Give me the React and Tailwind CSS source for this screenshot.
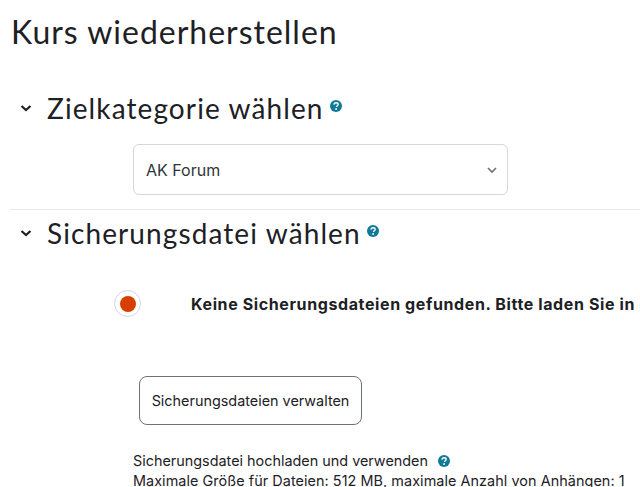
function Help({ size = 12 }) {
  return (
    <svg width={size} height={size} viewBox="0 0 16 16" className="shrink-0">
      <circle cx="8" cy="8" r="8" fill="#0f7a96" />
      <path d="M5.3 6.2C5.4 4.6 6.6 3.7 8.1 3.7c1.6 0 2.7 1 2.7 2.2 0 1-.6 1.5-1.3 2-.6.4-.8.7-.8 1.4" fill="none" stroke="#fff" strokeWidth="1.9" />
      <circle cx="8.1" cy="12" r="1.2" fill="#fff" />
    </svg>
  );
}

function Chevron() {
  return (
    <svg width="14" height="14" viewBox="0 0 14 14" className="shrink-0">
      <path d="M2.5 5l4.5 4 4.5-4" fill="none" stroke="#1d2125" strokeWidth="2.2" />
    </svg>
  );
}

function SectionTitle({ title }) {
  return (
    <div className="flex items-center pl-[19px]">
      <Chevron />
      <h3 className="ml-[14px] text-[28px] leading-[34px] text-[#1d2125] font-['Lato',sans-serif] tracking-[1.1px]">{title}</h3>
      <span className="ml-[6px] mb-[5px]"><Help /></span>
    </div>
  );
}

export default function App() {
  return (
    <div className="w-[640px] h-[487px] overflow-hidden bg-white text-[#1d2125] font-['Inter',sans-serif]">
      <h2 className="pl-[11px] pt-[13px] text-[32px] leading-[38px] font-['Lato',sans-serif] tracking-[1px]">Kurs wiederherstellen</h2>
      <div className="mt-[40px]"><SectionTitle title="Zielkategorie wählen" /></div>
      <div className="ml-[133px] mt-[19px] flex h-[51px] w-[375px] items-center justify-between rounded-[6px] border border-[#d5d7da] pl-[12px] pr-[10px]">
        <span className="text-[16px] text-[#2f343a]">AK Forum</span>
        <svg width="10" height="10" viewBox="0 0 10 10"><path d="M1 3l4 4 4-4" fill="none" stroke="#6a737b" strokeWidth="1.6" /></svg>
      </div>
      <div className="ml-[10px] mt-[14px] h-px bg-[#e8e9ea]" />
      <div className="mt-[6px]"><SectionTitle title="Sicherungsdatei wählen" /></div>
      <div className="mt-[40px] flex items-center pl-[114px]">
        <div className="flex h-[27px] w-[27px] shrink-0 items-center justify-center rounded-full border border-[#d5d7da]">
          <div className="h-[16px] w-[16px] rounded-full bg-[#d73f00]" />
        </div>
        <p className="ml-[50px] whitespace-nowrap text-[16px] font-bold tracking-[0.61px]">Keine Sicherungsdateien gefunden. Bitte laden Sie in diesem Formular eine Datei hoch.</p>
      </div>
      <button className="ml-[139px] mt-[59px] flex h-[49px] w-[223px] items-center justify-center rounded-[8px] border border-[#6a737b] text-[14.4px] text-[#1d2125]">Sicherungsdateien verwalten</button>
      <div className="ml-[133px] mt-[26px] flex items-center text-[14.4px] leading-[20px]">
        <span>Sicherungsdatei hochladen und verwenden</span>
        <span className="ml-[10px]"><Help /></span>
      </div>
      <p className="ml-[133px] whitespace-nowrap text-[14.4px] leading-[20px] tracking-[0.06px]">Maximale Größe für Dateien: 512 MB, maximale Anzahl von Anhängen: 1</p>
    </div>
  );
}
